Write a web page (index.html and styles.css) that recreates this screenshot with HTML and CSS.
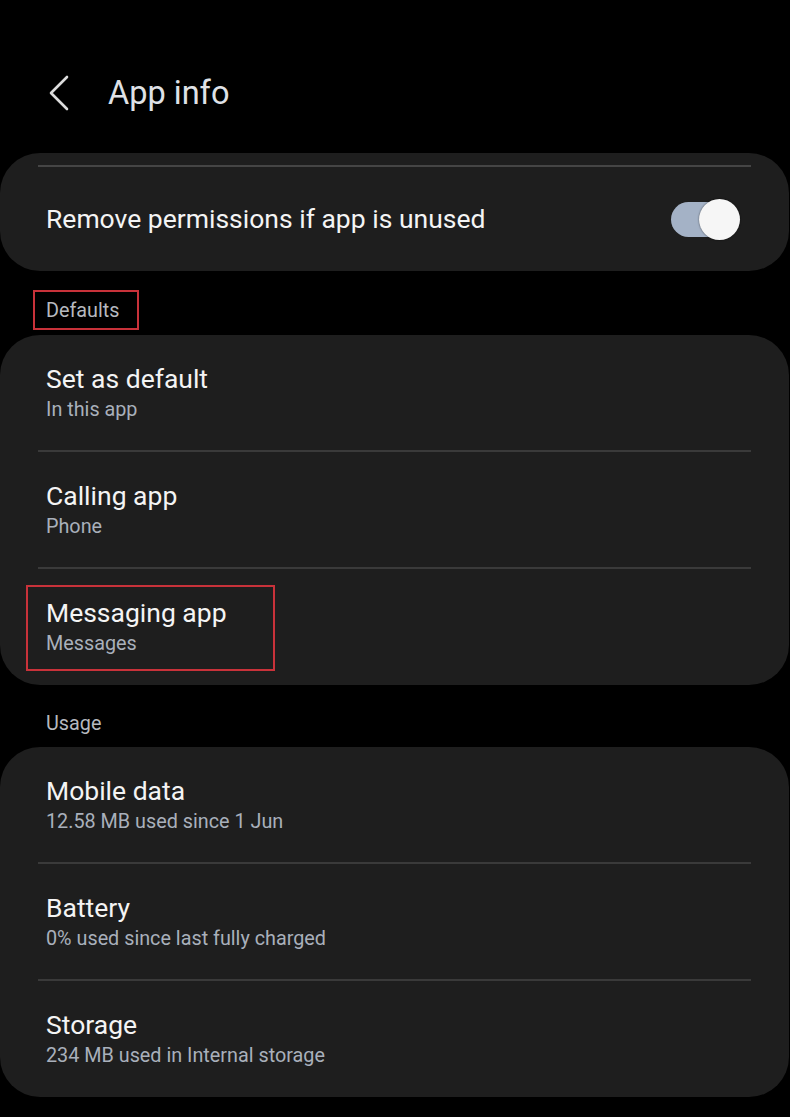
FILE: index.html
```html
<!DOCTYPE html>
<html>
<head>
<meta charset="utf-8">
<link rel="stylesheet" href="styles.css">
</head>
<body>
<header class="topbar">
  <svg class="back" width="24" height="36" viewBox="0 0 24 36"><path d="M19 2 L3 18 L19 34" fill="none" stroke="#dcdcdc" stroke-width="2.6" stroke-linecap="round" stroke-linejoin="round"/></svg>
  <h1 class="title">App info</h1>
</header>

<section class="card card-top">
  <div class="divider top-divider"></div>
  <div class="row row-toggle">
    <span class="row-title">Remove permissions if app is unused</span>
    <span class="toggle"><span class="knob"></span></span>
  </div>
</section>

<div class="section-label"><span class="marked marked-small">Defaults</span></div>

<section class="card">
  <div class="row"><div><div class="row-title">Set as default</div><div class="row-sub">In this app</div></div></div>
  <div class="divider"></div>
  <div class="row"><div><div class="row-title">Calling app</div><div class="row-sub">Phone</div></div></div>
  <div class="divider"></div>
  <div class="row"><div class="marked marked-big"><div class="row-title">Messaging app</div><div class="row-sub">Messages</div></div></div>
</section>

<div class="section-label section-label-2">Usage</div>

<section class="card">
  <div class="row"><div><div class="row-title">Mobile data</div><div class="row-sub">12.58 MB used since 1 Jun</div></div></div>
  <div class="divider"></div>
  <div class="row"><div><div class="row-title">Battery</div><div class="row-sub">0% used since last fully charged</div></div></div>
  <div class="divider"></div>
  <div class="row"><div><div class="row-title">Storage</div><div class="row-sub">234 MB used in Internal storage</div></div></div>
</section>
</body>
</html>
```

FILE: styles.css
```css
html, body {
  margin: 0;
  padding: 0;
  background: #000;
}
body {
  width: 790px;
  height: 1117px;
  overflow: hidden;
  font-family: Roboto, "Noto Sans", sans-serif;
  color: #f2f2f2;
}
.topbar {
  height: 153px;
  display: flex;
  align-items: flex-start;
  padding-top: 75px;
  box-sizing: border-box;
}
.back {
  margin-left: 48px;
  display: block;
}
.title {
  margin: -2px 0 0 36px;
  font-size: 32.5px;
  font-weight: 400;
  color: #dfe1e6;
  line-height: 40px;
}
.card {
  background: #1e1e1e;
  border-radius: 40px;
  margin: 0 1px 0 0;
}
.card-top {
  height: 118px;
  box-sizing: border-box;
  padding-top: 12px;
}
.divider {
  height: 2px;
  background: #3a3a3a;
  margin: -1px 38px 0;
}
.top-divider {
  background: #454545;
  margin-top: 0;
}
.row {
  height: 116px;
  display: flex;
  align-items: center;
  padding: 0 46px;
  box-sizing: border-box;
}
.card-top .row {
  height: 104px;
  justify-content: space-between;
  padding-right: 52px;
}
.row-title {
  font-size: 26.5px;
  line-height: 32px;
  color: #f4f4f4;
}
.row-sub {
  font-size: 19.8px;
  line-height: 26px;
  margin-top: 2px;
  color: #a9b0bb;
}
.toggle {
  position: relative;
  width: 66px;
  height: 35px;
  border-radius: 18px;
  background: #a4b2c6;
}
.knob {
  position: absolute;
  right: -3px;
  top: -3px;
  width: 41px;
  height: 41px;
  border-radius: 50%;
  background: #f6f6f6;
  box-shadow: 0 0 2px rgba(0,0,0,0.6);
}
.section-label {
  height: 64px;
  box-sizing: border-box;
  padding: 28px 0 0 46px;
  font-size: 19.8px;
  line-height: 24px;
  color: #b6b9bf;
}
.section-label-2 {
  height: 62px;
  padding-top: 27px;
}
.marked {
  position: relative;
}
.marked-small {
  display: inline-block;
  vertical-align: top;
}
.marked::after {
  content: "";
  position: absolute;
  border: 2px solid #c9323a;
}
.marked-small::after {
  left: -13px;
  right: -19px;
  top: -9px;
  bottom: -7px;
}
.marked-big::after {
  left: -20px;
  right: -48px;
  top: -12px;
  bottom: -14px;
}
```
